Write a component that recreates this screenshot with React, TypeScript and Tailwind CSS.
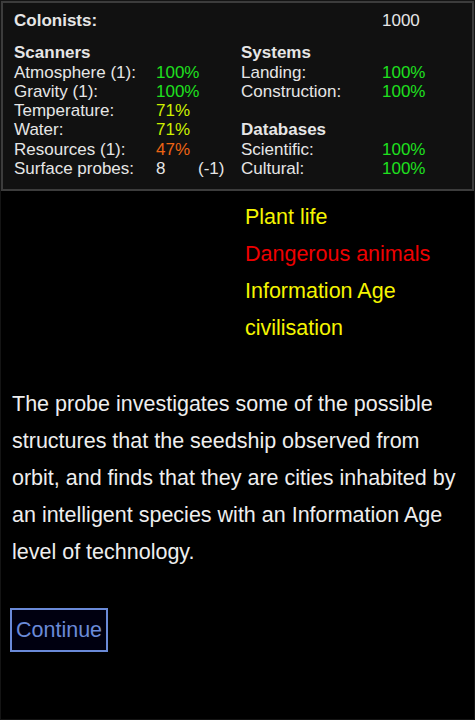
import React from 'react';

type Row = { label?: string; value?: string; color?: string; extra?: string; bold?: boolean };

const GREEN = 'text-[#1fe01f]';
const LIME = 'text-[#cdf000]';
const ORANGE = 'text-[#ec6414]';

const left: Row[] = [
  { label: 'Scanners', bold: true },
  { label: 'Atmosphere (1):', value: '100%', color: GREEN },
  { label: 'Gravity (1):', value: '100%', color: GREEN },
  { label: 'Temperature:', value: '71%', color: LIME },
  { label: 'Water:', value: '71%', color: LIME },
  { label: 'Resources (1):', value: '47%', color: ORANGE },
  { label: 'Surface probes:', value: '8', color: 'text-[#e6e6e6]', extra: '(-1)' },
];

const right: Row[] = [
  { label: 'Systems', bold: true },
  { label: 'Landing:', value: '100%', color: GREEN },
  { label: 'Construction:', value: '100%', color: GREEN },
  {},
  { label: 'Databases', bold: true },
  { label: 'Scientific:', value: '100%', color: GREEN },
  { label: 'Cultural:', value: '100%', color: GREEN },
];

const findings = [
  { text: 'Plant life', color: 'text-[#f5f500]' },
  { text: 'Dangerous animals', color: 'text-[#ee0000]' },
  { text: 'Information Age', color: 'text-[#f5f500]' },
  { text: 'civilisation', color: 'text-[#f5f500]' },
];

const App: React.FC = () => {
  return (
    <div className="h-[720px] w-full bg-black border border-[#141414] font-['Liberation_Sans',Arial,sans-serif] overflow-hidden">
      {/* Status panel */}
      <div className="bg-[#111111] border-2 border-[#3c3c3c] pl-[11px] pt-[8px] pb-[11px] text-[17px] leading-[19.3px] text-[#e6e6e6]">
        <div className="grid grid-cols-[142px_42px_43px_141px_1fr]">
          <div className="font-bold col-span-4">Colonists:</div>
          <div>1000</div>
        </div>
        <div className="grid grid-cols-[142px_42px_43px_141px_1fr] mt-[13px]">
          {left.map((row, i) => (
            <React.Fragment key={i}>
              <div className={row.bold ? 'font-bold' : ''}>{row.label}</div>
              <div className={row.color}>{row.value}</div>
              <div>{row.extra}</div>
              <div className={right[i].bold ? 'font-bold' : ''}>{right[i].label ?? '\u00a0'}</div>
              <div className={right[i].color}>{right[i].value}</div>
            </React.Fragment>
          ))}
        </div>
      </div>

      {/* Findings */}
      <ul className="ml-[244px] mt-[8px] text-[21.5px] leading-[37px]">
        {findings.map((f) => (
          <li key={f.text} className={f.color}>{f.text}</li>
        ))}
      </ul>

      {/* Description */}
      <p className="mt-[39px] pl-[11px] pr-[10px] text-[21.5px] leading-[37px] text-[#eeeeee]">
        The probe investigates some of the possible structures that the seedship observed from orbit, and finds that they are cities inhabited by an intelligent species with an Information Age level of technology.
      </p>

      <button className="mt-[37px] ml-[9px] h-[44px] px-[4px] border-2 border-[#6a8ad8] bg-[#000010] text-[#6a8ad8] text-[21.5px] leading-[23px] font-['Liberation_Sans',Arial,sans-serif]">
        Continue
      </button>
    </div>
  );
};

export default App;
